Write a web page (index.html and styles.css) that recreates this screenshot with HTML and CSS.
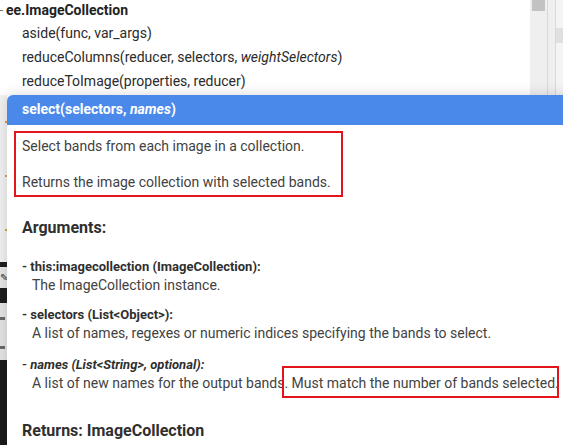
FILE: index.html
```html
<!DOCTYPE html>
<html>
<head>
<meta charset="utf-8">
<link rel="stylesheet" href="styles.css">
</head>
<body>
<div class="screen">
  <div class="main">
    <div class="tree">
      <div class="tree-row group"><span class="twisty"></span>ee.ImageCollection</div>
      <div class="tree-row item">aside(func, var_args)</div>
      <div class="tree-row item">reduceColumns(reducer, selectors, <i>weightSelectors</i>)</div>
      <div class="tree-row item">reduceToImage(properties, reducer)</div>
    </div>
    <div class="gutter">
      <div class="g-light"><span class="dot"></span><span class="dot"></span><span class="dot"></span></div>
      <div class="g-dark g-a"></div>
      <div class="g-icon">✎</div>
      <div class="g-dark g-b"></div>
      <div class="g-grey"><span class="tick"></span><span class="tick"></span></div>
      <div class="g-dark g-c"></div>
    </div>
  </div>
  <div class="scroll1"><div class="thumb"></div></div>
  <div class="scroll2"></div>
  <div class="scroll3"><div class="thumb3"></div></div>

  <div class="popup">
    <div class="popup-head">select(selectors, <i>names</i>)</div>
    <div class="popup-body">
      <div class="summary">
        <p>Select bands from each image in a collection.</p>
        <p>Returns the image collection with selected bands.</p>
      </div>
      <h2 class="section">Arguments:</h2>
      <div class="arg arg-first">
        <div class="arg-name">- this:imagecollection (ImageCollection):</div>
        <div class="arg-desc">The ImageCollection instance.</div>
      </div>
      <div class="arg">
        <div class="arg-name">- selectors (List&lt;Object&gt;):</div>
        <div class="arg-desc">A list of names, regexes or numeric indices specifying the bands to select.</div>
      </div>
      <div class="arg arg-last">
        <div class="arg-name"><i>- names (List&lt;String&gt;, optional):</i></div>
        <div class="arg-desc">A list of new names for the output bands. Must match the number of bands selected.</div>
      </div>
      <h2 class="section returns">Returns: ImageCollection</h2>
    </div>
    <div class="mark"></div>
  </div>
</div>
</body>
</html>
```
FILE: styles.css
```css
html, body {
  margin: 0;
  padding: 0;
  background: #ffffff;
  overflow: hidden;
}
.screen {
  position: relative;
  width: 563px;
  height: 445px;
  display: flex;
  font-family: Roboto, "Noto Sans", sans-serif;
  overflow: hidden;
}
.main {
  flex: 1;
  display: flex;
  flex-direction: column;
  background: #ffffff;
}
.tree {
  height: 95px;
  flex: none;
}
.tree-row {
  height: 24px;
  line-height: 24px;
  font-size: 14px;
  color: #2b2b2b;
  white-space: nowrap;
}
.tree-row.group {
  height: 22px;
  line-height: 22px;
  font-weight: 700;
  font-size: 14px;
  color: #222;
  padding-left: 6px;
  position: relative;
  margin-top: -1px;
}
.twisty {
  position: absolute;
  left: 0;
  top: 11px;
  width: 3px;
  height: 1px;
  background: #777;
}
.tree-row.item {
  padding-left: 22px;
}
.gutter {
  width: 7px;
  flex: 1;
  display: flex;
  flex-direction: column;
}
.g-light {
  height: 167px;
  background: #f1f1f1;
  display: flex;
  flex-direction: column;
  padding-top: 26px;
  box-sizing: border-box;
  gap: 52px;
}
.dot {
  display: block;
  width: 2px;
  height: 2px;
  margin-left: 5px;
  background: #e39a2d;
}
.g-dark { background: #1d1d1d; }
.g-a { height: 5px; }
.g-icon {
  height: 21px;
  background: #e6e6e6;
  font-size: 10px;
  line-height: 21px;
  color: #333;
  overflow: hidden;
}
.g-b { height: 15px; }
.g-grey {
  height: 57px;
  background: #e4e4e4;
  display: flex;
  flex-direction: column;
  padding-top: 14px;
  gap: 26px;
  box-sizing: border-box;
}
.tick {
  display: block;
  width: 5px;
  height: 3px;
  background: #6a6a6a;
}
.g-c { flex: 1; background: #1a1a1a; }
.scroll1 {
  width: 17px;
  background: #efefef;
  border-right: 1px solid #d8d8d8;
  flex: none;
}
.thumb {
  margin: 0 2px;
  height: 11px;
  background: #c2c2c2;
}
.scroll2 {
  width: 7px;
  background: #efefef;
  border-right: 1px solid #d8d8d8;
  flex: none;
}
.scroll3 {
  width: 7px;
  background: #f4f4f4;
  flex: none;
  padding-top: 28px;
}
.thumb3 {
  height: 15px;
  background: #e0e0e0;
}

.popup {
  position: absolute;
  left: 7px;
  top: 95px;
  width: 580px;
  height: 360px;
  background: #ffffff;
  border-top-left-radius: 6px;
  box-shadow: 0 0 14px rgba(0, 0, 0, 0.16);
}
.popup-head {
  height: 30px;
  background: #4a89ea;
  color: #ffffff;
  font-weight: 700;
  font-size: 14px;
  line-height: 29px;
  padding-left: 15px;
  border-top-left-radius: 6px;
}
.popup-body {
  padding: 6px 0 0 7px;
  color: #424242;
  font-size: 14px;
}
.summary {
  width: 329px;
  box-sizing: border-box;
  border: 2px solid #e3141c;
  padding: 3px 6px;
}
.summary p {
  margin: 0;
  line-height: 20px;
}
.summary p + p {
  margin-top: 16px;
}
.section {
  margin: 21px 0 0 8px;
  font-size: 16px;
  line-height: 20px;
  font-weight: 700;
  color: #2f2f2f;
}
.arg {
  margin-left: 8px;
  margin-top: 12px;
}
.arg.arg-first { margin-top: 20px; }
.arg.arg-last { margin-top: 14px; }
.arg-name {
  font-size: 13px;
  font-weight: 700;
  line-height: 18px;
  color: #2f2f2f;
}
.arg-desc {
  padding-left: 10px;
  line-height: 18px;
  white-space: nowrap;
}
.returns {
  margin-top: 29px;
}
.mark {
  position: absolute;
  left: 275px;
  top: 271px;
  width: 277px;
  height: 32px;
  box-sizing: border-box;
  border: 2px solid #e3141c;
}
```
